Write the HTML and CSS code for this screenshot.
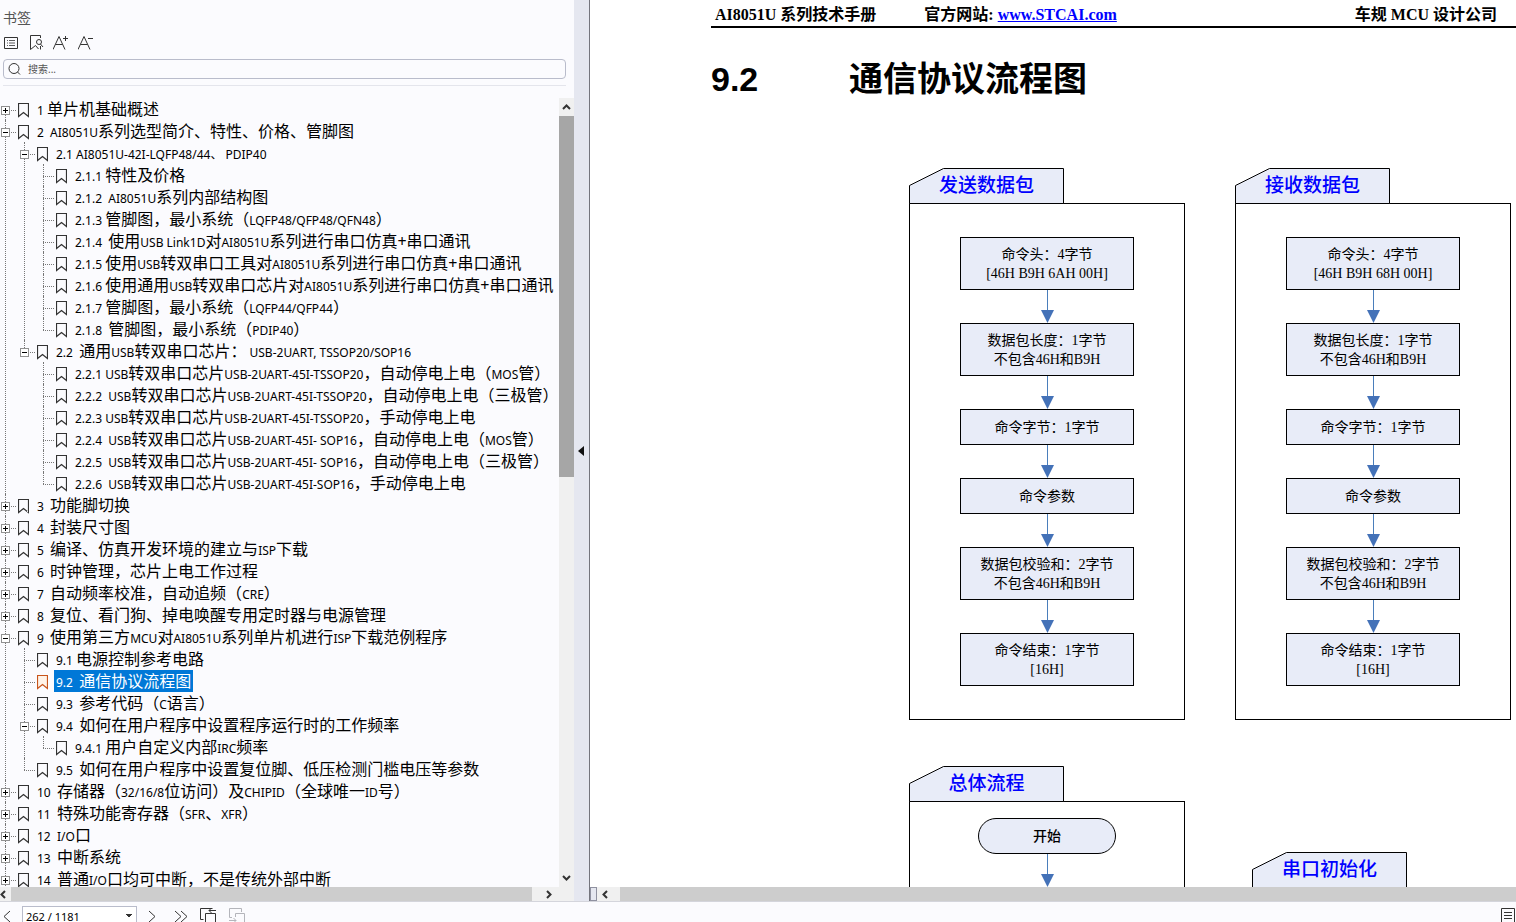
FILE: index.html
```html
<!DOCTYPE html>
<html lang="zh-CN">
<head>
    <meta charset="UTF-8">
    <meta name="viewport" content="width=device-width, initial-scale=1.0">
    <title>AI8051U 系列技术手册</title>
    <link rel="stylesheet" href="styles.css">
</head>
<body>
    <!-- Shared icons -->
    <svg class="sprite" aria-hidden="true">
        <symbol id="mark" viewBox="0 0 11 15"><path d="M.5.5h10v13L5.500 9.500.5 13.500z" stroke-width="1.200"/></symbol>
        <symbol id="up" viewBox="0 0 9 6"><path d="M1 5l3.500-3.500L8 5" stroke-width="2"/></symbol>
        <symbol id="down" viewBox="0 0 9 6"><path d="M1 1l3.500 3.500L8 1" stroke-width="2"/></symbol>
        <symbol id="left" viewBox="0 0 6 9"><path d="M5 1L1.500 4.500 5 8" stroke-width="2"/></symbol>
        <symbol id="right" viewBox="0 0 6 9"><path d="M1 1l3.500 3.500L1 8" stroke-width="2"/></symbol>
        <symbol id="arrow" viewBox="0 0 13 33"><path d="M6.500 0v21" stroke="#4a7ebb"/><path d="M0 20h13L6.500 33z" fill="#4472b8" stroke="none"/></symbol>
        <symbol id="tab" viewBox="0 0 155 36"><path d="M.5 35.500v-18L34.500.5h120v35z" fill="#e8ecf8" stroke="#000"/></symbol>
    </svg>

    <div class="app">
        <div class="main">
            <!-- Bookmark panel -->
            <aside class="sidebar">
                <div class="sidebar-header">
                    <h2>书签</h2>
                    <div class="toolbar">
                        <button aria-label="选项"><svg width="16" height="16"><path d="M1.500 2.500h13v11h-13z"/><path d="M6 5.500h6M6 8h6M6 10.500h6M4 5.500h1M4 8h1M4 10.500h1" stroke-width=".8"/></svg></button>
                        <button aria-label="查找书签"><svg width="16" height="16"><path d="M12.500 3V.5h-10v14l5-4 3 3.500M12.500 11v3.500"/><circle cx="11" cy="7" r="2.500"/><path d="M12.500 9l2.500 3"/></svg></button>
                        <button aria-label="放大"><svg width="16" height="16"><path d="M0 14.500L6 1.500l6 13M2.500 9.500h7M10 3.500h5M12.500 1v5"/></svg></button>
                        <button aria-label="缩小"><svg width="16" height="16"><path d="M0 14.500L6 1.500l6 13M2.500 9.500h7M10 3.500h5"/></svg></button>
                    </div>
                    <label class="search">
                        <svg width="14" height="14"><circle cx="6" cy="6.500" r="5"/><path d="M9.500 10l2.500 2.500"/></svg>
                        <input type="text" placeholder="搜索..." aria-label="搜索">
                    </label>
                </div>

                <div class="tree-area">
                    <ul class="tree">
                        <li><div class="row"><button class="toggle plus" aria-label="展开"></button><svg class="mark"><use href="#mark"/></svg><a href="#"><small>1 </small>单片机基础概述</a></div></li>
                        <li><div class="row"><button class="toggle" aria-label="折叠"></button><svg class="mark"><use href="#mark"/></svg><a href="#"><small>2  AI8051U</small>系列选型简介、特性、价格、管脚图</a></div>
                            <ul>
                                <li><div class="row"><button class="toggle" aria-label="折叠"></button><svg class="mark"><use href="#mark"/></svg><a href="#"><small>2.1 AI8051U-42I-LQFP48/44、 PDIP40</small></a></div>
                                    <ul>
                                        <li><div class="row"><svg class="mark"><use href="#mark"/></svg><a href="#"><small>2.1.1 </small>特性及价格</a></div></li>
                                        <li><div class="row"><svg class="mark"><use href="#mark"/></svg><a href="#"><small>2.1.2  AI8051U</small>系列内部结构图</a></div></li>
                                        <li><div class="row"><svg class="mark"><use href="#mark"/></svg><a href="#"><small>2.1.3 </small>管脚图，最小系统（<small>LQFP48/QFP48/QFN48</small>）</a></div></li>
                                        <li><div class="row"><svg class="mark"><use href="#mark"/></svg><a href="#"><small>2.1.4  </small>使用<small>USB Link1D</small>对<small>AI8051U</small>系列进行串口仿真+串口通讯</a></div></li>
                                        <li><div class="row"><svg class="mark"><use href="#mark"/></svg><a href="#"><small>2.1.5 </small>使用<small>USB</small>转双串口工具对<small>AI8051U</small>系列进行串口仿真+串口通讯</a></div></li>
                                        <li><div class="row"><svg class="mark"><use href="#mark"/></svg><a href="#"><small>2.1.6 </small>使用通用<small>USB</small>转双串口芯片对<small>AI8051U</small>系列进行串口仿真+串口通讯</a></div></li>
                                        <li><div class="row"><svg class="mark"><use href="#mark"/></svg><a href="#"><small>2.1.7 </small>管脚图，最小系统（<small>LQFP44/QFP44</small>）</a></div></li>
                                        <li><div class="row"><svg class="mark"><use href="#mark"/></svg><a href="#"><small>2.1.8  </small>管脚图，最小系统（<small>PDIP40</small>）</a></div></li>
                                    </ul>
                                </li>
                                <li><div class="row"><button class="toggle" aria-label="折叠"></button><svg class="mark"><use href="#mark"/></svg><a href="#"><small>2.2  </small>通用<small>USB</small>转双串口芯片：<small> USB-2UART, TSSOP20/SOP16</small></a></div>
                                    <ul>
                                        <li><div class="row"><svg class="mark"><use href="#mark"/></svg><a href="#"><small>2.2.1 USB</small>转双串口芯片<small>USB-2UART-45I-TSSOP20</small>，自动停电上电（<small>MOS</small>管）</a></div></li>
                                        <li><div class="row"><svg class="mark"><use href="#mark"/></svg><a href="#"><small>2.2.2  USB</small>转双串口芯片<small>USB-2UART-45I-TSSOP20</small>，自动停电上电（三极管）</a></div></li>
                                        <li><div class="row"><svg class="mark"><use href="#mark"/></svg><a href="#"><small>2.2.3 USB</small>转双串口芯片<small>USB-2UART-45I-TSSOP20</small>，手动停电上电</a></div></li>
                                        <li><div class="row"><svg class="mark"><use href="#mark"/></svg><a href="#"><small>2.2.4  USB</small>转双串口芯片<small>USB-2UART-45I- SOP16</small>，自动停电上电（<small>MOS</small>管）</a></div></li>
                                        <li><div class="row"><svg class="mark"><use href="#mark"/></svg><a href="#"><small>2.2.5  USB</small>转双串口芯片<small>USB-2UART-45I- SOP16</small>，自动停电上电（三极管）</a></div></li>
                                        <li><div class="row"><svg class="mark"><use href="#mark"/></svg><a href="#"><small>2.2.6  USB</small>转双串口芯片<small>USB-2UART-45I-SOP16</small>，手动停电上电</a></div></li>
                                    </ul>
                                </li>
                            </ul>
                        </li>
                        <li><div class="row"><button class="toggle plus" aria-label="展开"></button><svg class="mark"><use href="#mark"/></svg><a href="#"><small>3  </small>功能脚切换</a></div></li>
                        <li><div class="row"><button class="toggle plus" aria-label="展开"></button><svg class="mark"><use href="#mark"/></svg><a href="#"><small>4  </small>封装尺寸图</a></div></li>
                        <li><div class="row"><button class="toggle plus" aria-label="展开"></button><svg class="mark"><use href="#mark"/></svg><a href="#"><small>5  </small>编译、仿真开发环境的建立与<small>ISP</small>下载</a></div></li>
                        <li><div class="row"><button class="toggle plus" aria-label="展开"></button><svg class="mark"><use href="#mark"/></svg><a href="#"><small>6  </small>时钟管理，芯片上电工作过程</a></div></li>
                        <li><div class="row"><button class="toggle plus" aria-label="展开"></button><svg class="mark"><use href="#mark"/></svg><a href="#"><small>7  </small>自动频率校准，自动追频（<small>CRE</small>）</a></div></li>
                        <li><div class="row"><button class="toggle plus" aria-label="展开"></button><svg class="mark"><use href="#mark"/></svg><a href="#"><small>8  </small>复位、看门狗、掉电唤醒专用定时器与电源管理</a></div></li>
                        <li><div class="row"><button class="toggle" aria-label="折叠"></button><svg class="mark"><use href="#mark"/></svg><a href="#"><small>9  </small>使用第三方<small>MCU</small>对<small>AI8051U</small>系列单片机进行<small>ISP</small>下载范例程序</a></div>
                            <ul>
                                <li><div class="row"><svg class="mark"><use href="#mark"/></svg><a href="#"><small>9.1 </small>电源控制参考电路</a></div></li>
                                <li><div class="row selected"><svg class="mark"><use href="#mark"/></svg><a href="#"><small>9.2  </small>通信协议流程图</a></div></li>
                                <li><div class="row"><svg class="mark"><use href="#mark"/></svg><a href="#"><small>9.3  </small>参考代码（<small>C</small>语言）</a></div></li>
                                <li><div class="row"><button class="toggle" aria-label="折叠"></button><svg class="mark"><use href="#mark"/></svg><a href="#"><small>9.4  </small>如何在用户程序中设置程序运行时的工作频率</a></div>
                                    <ul>
                                        <li><div class="row"><svg class="mark"><use href="#mark"/></svg><a href="#"><small>9.4.1 </small>用户自定义内部<small>IRC</small>频率</a></div></li>
                                    </ul>
                                </li>
                                <li><div class="row"><svg class="mark"><use href="#mark"/></svg><a href="#"><small>9.5  </small>如何在用户程序中设置复位脚、低压检测门槛电压等参数</a></div></li>
                            </ul>
                        </li>
                        <li><div class="row"><button class="toggle plus" aria-label="展开"></button><svg class="mark"><use href="#mark"/></svg><a href="#"><small>10  </small>存储器（<small>32/16/8</small>位访问）及<small>CHIPID</small>（全球唯一<small>ID</small>号）</a></div></li>
                        <li><div class="row"><button class="toggle plus" aria-label="展开"></button><svg class="mark"><use href="#mark"/></svg><a href="#"><small>11  </small>特殊功能寄存器（<small>SFR</small>、<small>XFR</small>）</a></div></li>
                        <li><div class="row"><button class="toggle plus" aria-label="展开"></button><svg class="mark"><use href="#mark"/></svg><a href="#"><small>12  I/O</small>口</a></div></li>
                        <li><div class="row"><button class="toggle plus" aria-label="展开"></button><svg class="mark"><use href="#mark"/></svg><a href="#"><small>13  </small>中断系统</a></div></li>
                        <li><div class="row"><button class="toggle plus" aria-label="展开"></button><svg class="mark"><use href="#mark"/></svg><a href="#"><small>14  </small>普通<small>I/O</small>口均可中断，不是传统外部中断</a></div></li>
                    </ul>
                    <div class="vscroll">
                        <button aria-label="向上"><svg width="9" height="6"><use href="#up"/></svg></button>
                        <div class="track"><div class="thumb"></div></div>
                        <button aria-label="向下"><svg width="9" height="6"><use href="#down"/></svg></button>
                    </div>
                </div>
                <div class="hscroll">
                    <button class="first" aria-label="向左"><svg width="6" height="9"><use href="#left"/></svg></button>
                    <div class="thumb"></div>
                    <button class="last" aria-label="向右"><svg width="6" height="9"><use href="#right"/></svg></button>
                </div>
            </aside>

            <button class="splitter" aria-label="折叠面板"><svg width="6" height="10"><path d="M6 0v10L0 5z"/></svg></button>

            <!-- Manual page -->
            <main class="viewer">
                <div class="page">
                    <header class="page-header">
                        <span>AI8051U 系列技术手册</span>
                        <span>官方网站: <a href="#">www.STCAI.com</a></span>
                        <span class="company">车规 MCU 设计公司</span>
                    </header>
                    <h1><span>9.2</span>通信协议流程图</h1>

                    <div class="charts">
                        <section class="chart">
                            <h3 class="tab"><svg><use href="#tab"/></svg><span>发送数据包</span></h3>
                            <div class="frame">
                                <div class="node tall">命令头：4字节<br>[46H B9H 6AH 00H]</div>
                                <svg class="arrow"><use href="#arrow"/></svg>
                                <div class="node tall">数据包长度：1字节<br>不包含46H和B9H</div>
                                <svg class="arrow"><use href="#arrow"/></svg>
                                <div class="node">命令字节：1字节</div>
                                <svg class="arrow"><use href="#arrow"/></svg>
                                <div class="node">命令参数</div>
                                <svg class="arrow"><use href="#arrow"/></svg>
                                <div class="node tall">数据包校验和：2字节<br>不包含46H和B9H</div>
                                <svg class="arrow"><use href="#arrow"/></svg>
                                <div class="node tall">命令结束：1字节<br>[16H]</div>
                            </div>
                        </section>
                        <section class="chart">
                            <h3 class="tab"><svg><use href="#tab"/></svg><span>接收数据包</span></h3>
                            <div class="frame">
                                <div class="node tall">命令头：4字节<br>[46H B9H 68H 00H]</div>
                                <svg class="arrow"><use href="#arrow"/></svg>
                                <div class="node tall">数据包长度：1字节<br>不包含46H和B9H</div>
                                <svg class="arrow"><use href="#arrow"/></svg>
                                <div class="node">命令字节：1字节</div>
                                <svg class="arrow"><use href="#arrow"/></svg>
                                <div class="node">命令参数</div>
                                <svg class="arrow"><use href="#arrow"/></svg>
                                <div class="node tall">数据包校验和：2字节<br>不包含46H和B9H</div>
                                <svg class="arrow"><use href="#arrow"/></svg>
                                <div class="node tall">命令结束：1字节<br>[16H]</div>
                            </div>
                        </section>
                        <section class="chart overall">
                            <h3 class="tab"><svg><use href="#tab"/></svg><span>总体流程</span></h3>
                            <div class="frame">
                                <div class="node start">开始</div>
                                <svg class="arrow"><use href="#arrow"/></svg>
                            </div>
                        </section>
                        <section class="chart serial">
                            <h3 class="tab"><svg><use href="#tab"/></svg><span>串口初始化</span></h3>
                        </section>
                    </div>
                </div>
                <div class="hscroll">
                    <span class="handle"></span>
                    <button aria-label="向左"><svg width="6" height="9"><use href="#left"/></svg></button>
                    <div class="thumb"></div>
                </div>
            </main>
        </div>

        <!-- Page navigation -->
        <footer class="pager">
            <button aria-label="上一页"><svg width="8" height="13"><path d="M7 1L1 6.500 7 12"/></svg></button>
            <select aria-label="页码"><option>262 / 1181</option></select>
            <button aria-label="下一页"><svg width="8" height="13"><path d="M1 1l6 5.500L1 12"/></svg></button>
            <button aria-label="末页"><svg width="14" height="13"><path d="M1 1l6 5.500L1 12M7 1l6 5.500L7 12"/></svg></button>
            <button aria-label="上一视图"><svg width="17" height="16"><path d="M3.500 11.500h-3V.5h12M5.500 16V5.500h10V16M9 2.500h7M11.500 0L9 2.500 11.500 5"/></svg></button>
            <button class="disabled" aria-label="下一视图" disabled><svg width="17" height="16"><path d="M3 9.500H.5v-9h12V4M6.500 9V5.500h9V16M0 12.500h7M4.500 10L7 12.500 4.500 15"/></svg></button>
            <button class="layout" aria-label="视图"><svg width="14" height="16"><path d="M.5.500h13v15H.5zM3 4.500h8M3 7.500h8M3 10.500h8"/></svg></button>
        </footer>
    </div>
</body>
</html>
```
FILE: styles.css
```css
* {
    box-sizing: border-box;
}

body {
    margin: 0;
    background: #fbfbfe;
    color: #000;
    font-family: "Noto Sans", "Noto Sans CJK SC", sans-serif;
}

button {
    display: flex;
    align-items: center;
    justify-content: center;
    margin: 0;
    padding: 0;
    border: 0;
    background: none;
}

svg {
    flex: none;
    fill: none;
    stroke: #333;
}

ul {
    margin: 0;
    padding: 0;
    list-style: none;
}

.sprite {
    position: absolute;
    width: 0;
    height: 0;
}

.app {
    display: flex;
    flex-direction: column;
    height: 100vh;
    overflow: hidden;
}

.main {
    display: flex;
    flex: 1;
    min-height: 0;
}

/* Bookmark panel */
.sidebar {
    display: flex;
    flex-direction: column;
    flex: none;
    width: 574px;
}

.sidebar-header {
    margin: 0 8px 0 3px;
    padding: 8px 0 6px;
    border-bottom: 1px solid #e4e5ec;
}

.sidebar-header h2 {
    margin: 0;
    color: #555;
    font-size: 14px;
    font-weight: 400;
    line-height: 20px;
}

.toolbar {
    display: flex;
    gap: 9px;
    margin-top: 7px;
}

.search {
    display: flex;
    align-items: center;
    gap: 6px;
    height: 20px;
    margin-top: 8px;
    padding: 0 4px;
    border: 1px solid #b9bccb;
    border-radius: 4px;
}

.search input {
    flex: 1;
    padding: 0;
    border: 0;
    outline: 0;
    background: none;
    font-family: inherit;
    font-size: 10px;
}

.search input::placeholder {
    color: #555;
}

.tree-area {
    display: flex;
    flex: 1;
    min-height: 0;
    margin-top: 12px;
}

.tree {
    flex: 1;
    min-width: 0;
    overflow: hidden;
}

.tree ul {
    padding-left: 19px;
}

/* Dotted guide lines */
.tree li {
    position: relative;
}

.tree li::before {
    content: "";
    position: absolute;
    top: 0;
    bottom: 0;
    left: 5px;
    border-left: 1px dotted #777;
}

.tree > li:first-child::before {
    top: 12px;
}

.tree ul > li:last-child::before {
    bottom: auto;
    height: 12px;
}

.row {
    position: relative;
    display: flex;
    align-items: center;
    height: 22px;
    padding-left: 18px;
}

.row::before {
    content: "";
    position: absolute;
    top: 12px;
    left: 5px;
    width: 11px;
    border-top: 1px dotted #777;
}

.toggle {
    position: absolute;
    top: 8px;
    left: 1px;
    width: 9px;
    height: 9px;
    border: 1px solid #919191;
    background: linear-gradient(#000, #000) center / 5px 1px no-repeat #fff;
}

.toggle.plus {
    background: linear-gradient(#000, #000) center / 5px 1px no-repeat, linear-gradient(#000, #000) center / 1px 5px no-repeat #fff;
}

.mark {
    width: 11px;
    height: 15px;
    margin-top: 2px;
}

.row a {
    height: 22px;
    margin-left: 6px;
    padding: 0 2px;
    color: #000;
    font-size: 16px;
    line-height: 22px;
    text-decoration: none;
    white-space: pre;
}

.row small {
    font-size: 12px;
    line-height: 1;
}

.selected a {
    background: #0078d7;
    color: #fff;
}

.selected .mark {
    fill: #fff3e8;
    stroke: #c8551b;
}

/* Scroll bars */
.vscroll {
    display: flex;
    flex-direction: column;
    width: 15px;
    background: #f0f0f0;
}

.vscroll button {
    height: 18px;
}

.track {
    flex: 1;
}

.vscroll .thumb {
    height: 48%;
    background: #a6a6a6;
}

.hscroll {
    display: flex;
    flex: none;
    height: 14px;
    background: #f0f0f0;
}

.hscroll .thumb {
    flex: 1;
    background: #cdcdcd;
}

.hscroll button {
    width: 23px;
    padding-right: 8px;
}

.hscroll .first {
    width: 11px;
    justify-content: flex-start;
}

.hscroll .last {
    width: 42px;
}

.splitter {
    width: 16px;
    padding-right: 2px;
    border-right: 1px solid #74757d;
    background: #e5e7f0;
}

.splitter svg {
    fill: #111;
    stroke: none;
}

/* Manual page */
.viewer {
    display: flex;
    flex-direction: column;
    flex: 1;
    min-width: 0;
}

.page {
    flex: 1;
    min-height: 0;
    padding-left: 121px;
    overflow: hidden;
    background: #fff;
    font-family: "Liberation Serif", "Noto Sans CJK SC", serif;
}

.page-header {
    display: flex;
    gap: 48px;
    height: 28px;
    padding: 3px 19px 0 4px;
    border-bottom: 2px solid #000;
    font-size: 16px;
    font-weight: 700;
    line-height: 24px;
    white-space: nowrap;
}

.page-header a {
    color: #00f;
}

.company {
    margin-left: auto;
}

h1 {
    display: flex;
    margin: 26px 0 0;
    font-family: "Liberation Sans", "Noto Sans CJK SC", sans-serif;
    font-size: 34px;
    line-height: 50px;
}

h1 span {
    width: 138px;
}

.charts {
    display: grid;
    grid-template-columns: 276px 276px;
    column-gap: 50px;
    margin: 64px 0 0 198px;
}

.tab {
    position: relative;
    width: 155px;
    height: 36px;
    margin: 0 0 -1px;
    color: #00f;
    font-size: 19px;
    font-weight: 500;
    line-height: 36px;
    text-align: center;
}

.tab svg {
    position: absolute;
    inset: 0;
    width: 155px;
    height: 36px;
}

.tab span {
    position: relative;
}

.frame {
    display: flex;
    flex-direction: column;
    align-items: center;
    padding: 33px 0;
    border: 1px solid #000;
}

.node {
    display: flex;
    flex-direction: column;
    justify-content: center;
    width: 174px;
    height: 36px;
    border: 1px solid #000;
    background: #e8ecf8;
    font-size: 14px;
    line-height: 19px;
    text-align: center;
}

.node.tall {
    display: block;
    height: 53px;
    padding-top: 7px;
}

.arrow {
    width: 13px;
    height: 33px;
}

.overall {
    margin-top: 46px;
}

.overall .frame {
    padding: 16px 0 200px;
}

.start {
    width: 138px;
    border-radius: 18px;
    font-weight: 500;
}

.serial {
    padding: 132px 0 0 17px;
}

.handle {
    width: 7px;
    border: 1px solid #8f91a0;
    background: #e5e7f0;
}

/* Page navigation */
.pager {
    display: flex;
    align-items: flex-start;
    height: 21px;
    padding: 6px 1px 0 3px;
    border-top: 1px solid #d4d5dc;
}

.pager button {
    justify-content: flex-start;
    min-width: 14px;
    height: 16px;
    margin-right: 12px;
}

.pager select {
    appearance: none;
    width: 115px;
    height: 20px;
    margin: -2px 11px 0 -7px;
    padding: 0 3px;
    border: 1px solid #b9bccb;
    border-radius: 0;
    background: linear-gradient(to bottom left, #333 50%, transparent 50%) no-repeat right 7px center / 4px 4px, linear-gradient(to bottom right, #333 50%, transparent 50%) no-repeat right 3px center / 4px 4px #fff;
    color: #000;
    font-family: inherit;
    font-size: 11px;
}

.pager .disabled svg {
    stroke: #b4b5bb;
}

.pager .layout {
    margin: 0 0 0 auto;
}
```
